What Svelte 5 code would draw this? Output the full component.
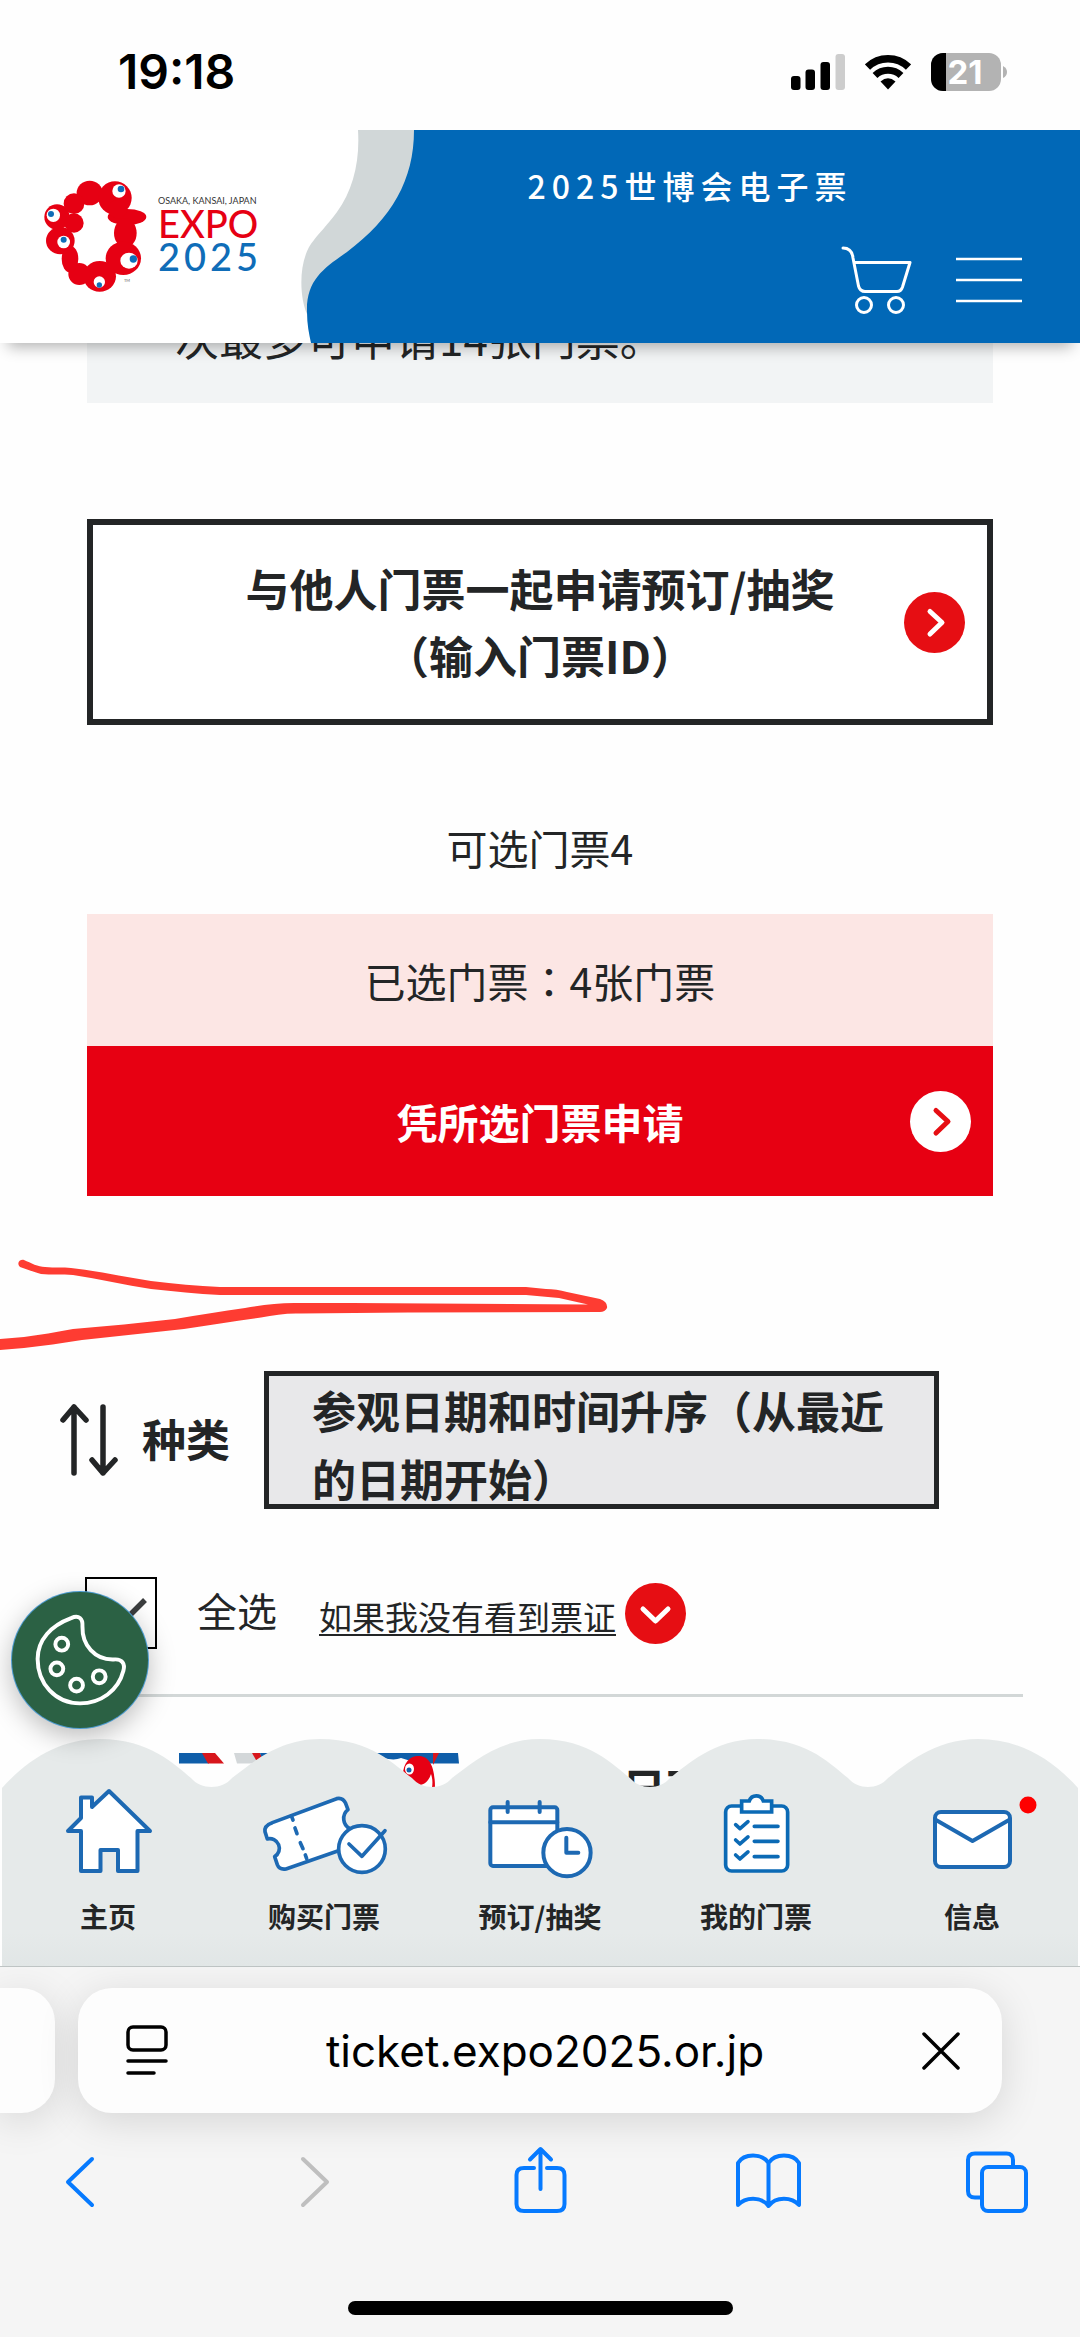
<script>
  let allSelected = $state(true);

  const navItems = [
    { id: 'home', label: '主页' },
    { id: 'buy', label: '购买门票' },
    { id: 'reserve', label: '预订/抽奖' },
    { id: 'mine', label: '我的门票' },
    { id: 'info', label: '信息' }
  ];
</script>

<div class="screen">
  <div class="status">
    <span class="clock">19:18</span>
    <div class="indicators">
      <svg width="54" height="36" viewBox="0 0 54 36" aria-hidden="true">
        <rect x="0" y="22" width="9.5" height="14" rx="3" />
        <rect x="14.5" y="15.5" width="9.5" height="20.5" rx="3" />
        <rect x="29.5" y="8" width="9.5" height="28" rx="3" />
        <rect x="44.5" y="0" width="9.5" height="36" rx="3" fill="#cdcdcd" />
      </svg>
      <svg width="46" height="36" viewBox="0 0 46 36" aria-hidden="true">
        <path d="M2.5 13A29.5 29.5 0 0 1 43.5 13" fill="none" stroke="#000" stroke-width="7.5" />
        <path d="M10 21.5A19 19 0 0 1 36 21.5" fill="none" stroke="#000" stroke-width="7" />
        <path d="M15.5 27.5Q23 21 30.5 27.5L23 35.500Z" />
      </svg>
      <svg width="76" height="38" viewBox="0 0 76 38" role="img" aria-label="21%">
        <clipPath id="cell"><rect width="70" height="38" rx="12" /></clipPath>
        <g clip-path="url(#cell)">
          <rect width="70" height="38" fill="#b3b3b3" />
          <rect width="15" height="38" />
        </g>
        <path d="M72 13Q76 15 76 19T72 25Z" fill="#b3b3b3" />
        <text x="34" y="31" text-anchor="middle" class="charge">21</text>
      </svg>
    </div>
  </div>

  <header>
    <svg class="header-bg" viewBox="0 0 1080 213" preserveAspectRatio="none" aria-hidden="true">
      <path d="M358 0C360 32 353 60 337 82C326 97 318 104 314 110C298 128 299 166 307 184L340 184L440 0Z" fill="#d1d7d8" />
      <path d="M414 0C414 50 392 88 347 122C324 138 306 150 307 182C307 194 309 204 311 213H1080V0Z" fill="#0168b7" />
    </svg>
    <a class="logo" href="#top" aria-label="EXPO 2025">
      <svg width="103" height="113" viewBox="41 31 309 339" aria-hidden="true">
        <g fill="#e60013">
          <ellipse cx="178" cy="70" rx="39" ry="37" />
          <circle cx="254" cy="85" r="50" />
          <ellipse cx="290" cy="142" rx="58" ry="24" />
          <ellipse cx="285" cy="190" rx="34" ry="44" />
          <ellipse cx="279" cy="266" rx="53" ry="50" />
          <ellipse cx="208" cy="320" rx="49" ry="46" />
          <circle cx="147" cy="313" r="33" />
          <ellipse cx="119" cy="268" rx="25" ry="40" />
          <ellipse cx="90" cy="213" rx="43" ry="41" />
          <circle cx="80" cy="142" r="38" />
          <circle cx="131" cy="160" r="29" />
          <circle cx="131" cy="102" r="31" />
          <circle cx="262" cy="118" r="28" />
        </g>
        <g fill="#fff">
          <circle cx="266" cy="64" r="20" />
          <ellipse cx="296" cy="273" rx="26" ry="24" />
          <circle cx="207" cy="337" r="17" />
          <circle cx="100" cy="217" r="19" />
          <circle cx="69" cy="137" r="20" />
        </g>
        <g fill="#0f6db8">
          <circle cx="272" cy="58" r="10" />
          <circle cx="309" cy="268" r="11" />
          <circle cx="207" cy="346" r="8" />
          <circle cx="100" cy="210" r="9" />
          <circle cx="62" cy="133" r="9" />
        </g>
        <text x="281" y="336" class="tm">TM</text>
      </svg>
      <span class="logo-text">
        <small>OSAKA, KANSAI, JAPAN</small>
        <span class="expo">EXPO</span>
        <span class="year">2025</span>
      </span>
    </a>
    <div class="header-main">
      <h1>2025世博会电子票</h1>
      <div class="actions">
        <button type="button" aria-label="购物车">
          <svg width="72" height="70" viewBox="0 0 72 70" aria-hidden="true" fill="none" stroke="#fff" stroke-width="3" stroke-linejoin="round" stroke-linecap="round">
            <path d="M2 3Q11 3 12 13L17.500 41Q19 46.500 24 46.500H56Q60 46.500 61.500 42L69 17.500H13" />
            <circle cx="23" cy="60" r="7.500" />
            <circle cx="55" cy="60" r="7.500" />
          </svg>
        </button>
        <button type="button" aria-label="菜单">
          <svg width="66" height="46" viewBox="0 0 66 46" aria-hidden="true" stroke="#fff" stroke-width="2.500">
            <path d="M0 2H66M0 23H66M0 44H66" />
          </svg>
        </button>
      </div>
    </div>
  </header>

  <main>
    <section class="column">
      <p class="notice">次最多可申请14张门票。</p>

      <button class="outline" type="button">
        <span class="text">与他人门票一起申请预订/抽奖<br />（输入门票ID）</span>
        <svg width="61" height="61" viewBox="0 0 61 61" aria-hidden="true">
          <circle cx="30.500" cy="30.500" r="30.500" fill="#e60e13" />
          <path d="M26 19.500L38 30.500L26 42" fill="none" stroke="#fff" stroke-width="5" stroke-linecap="round" stroke-linejoin="round" />
        </svg>
      </button>

      <p class="available">可选门票4</p>
      <p class="selected">已选门票：4张门票</p>
      <button class="apply" type="button">
        <span class="text">凭所选门票申请</span>
        <svg width="61" height="61" viewBox="0 0 61 61" aria-hidden="true">
          <circle cx="30.500" cy="30.500" r="30.500" fill="#fff" />
          <path d="M26 19.500L38 30.500L26 42" fill="none" stroke="#e60e13" stroke-width="5" stroke-linecap="round" stroke-linejoin="round" />
        </svg>
      </button>
    </section>

    <svg class="scribble" width="610" height="90" viewBox="0 0 610 90" aria-hidden="true">
      <path d="M24 0C31 3 38 7 45 7C55 8 63 7 71 8C98 11 124 17 151 21C175 24 197 26 220 27H526L546 29C553 29 560 30 567 32L600 39Q608 42 607 48Q605 52 600 52L408 52.500L300 53.500C287 53 274 55 261 57.500C236 61 210 65 184 69L82 80C62 83 43 86 24 88L0 90V79L24 77C40 75 56 72 73 69C107 66 141 63 175 59C199 55 222 51 245 48C262 45 278 43 294 43H351L588 44.500L559 38C548 37 537 36 526 35H220C197 34 174 31 151 29C125 25 99 19 73 15C62 14 51 15 41 14C33 12 27 9 20 7C16 3 20 -1 24 0Z" fill="#fe3c32" />
    </svg>

    <section class="sort">
      <svg width="60" height="74" viewBox="0 0 60 74" aria-hidden="true" fill="none" stroke="#232526" stroke-width="5.500" stroke-linecap="round" stroke-linejoin="round">
        <path d="M15 70V4M4 17L15 4L27 17M44 4V70M33 57L44 70L56 57" />
      </svg>
      <span id="sort-label">种类</span>
      <button class="sort-box" type="button" aria-haspopup="listbox" aria-labelledby="sort-label sort-value">
        <span id="sort-value">参观日期和时间升序（从最近的日期开始）</span>
      </button>
    </section>

    <section class="select-row">
      <label>
        <span class="box">
          <input type="checkbox" bind:checked={allSelected} />
          {#if allSelected}
            <svg width="72" height="72" viewBox="0 0 72 72" aria-hidden="true">
              <path d="M17 38L31 52L60 23" fill="none" stroke="#3c3e3f" stroke-width="5.500" />
            </svg>
          {/if}
        </span>
        <span class="all">全选</span>
      </label>
      <a class="missing" href="#missing">
        <span>如果我没有看到票证</span>
        <svg width="61" height="61" viewBox="0 0 61 61" aria-hidden="true">
          <circle cx="30.500" cy="30.500" r="30.500" fill="#e60e13" />
          <path d="M18 26L30.500 38L43 26" fill="none" stroke="#fff" stroke-width="5" stroke-linecap="round" stroke-linejoin="round" />
        </svg>
      </a>
    </section>
    <hr />

    <article class="ticket">
      <svg width="280" height="35" viewBox="0 0 280 35" aria-hidden="true">
        <path d="M0 0H24L30 10.500H0Z" fill="#0f5ea9" />
        <path d="M23 0H36L45 10.500H29Z" fill="#d7161c" />
        <path d="M55 0H73L81 10.500H58Z" fill="#d3d7d9" />
        <path d="M73 0H81L86 10.500H79Z" fill="#d7161c" />
        <path d="M81 0H100V10.500H85Z" fill="#0f5ea9" />
        <path d="M196 0H279L280 10.500H240L222 5C215 8 203 6 196 0Z" fill="#0f5ea9" />
        <path d="M254 0H260L254 12Z" fill="#d7161c" />
        <path d="M224 22C224 10 231 3 239 3C250 3 256 12 256 35H253C254 28 253 24 252 21C250 28 245 32 240 32C233 31 226 25 224 22Z" fill="#e60013" />
        <ellipse cx="230.500" cy="16" rx="4.500" ry="5.500" fill="#fff" />
        <circle cx="230" cy="17" r="2.500" fill="#0f5ea9" />
      </svg>
      <strong>日下</strong>
    </article>
  </main>

  <nav aria-label="主导航">
    <svg class="wave" viewBox="0 0 1080 227" preserveAspectRatio="none" aria-hidden="true">
      <defs>
        <linearGradient id="haze" x1="0" y1="0" x2="0" y2="1">
          <stop offset="0.85" stop-color="#e6eaea" />
          <stop offset="1" stop-color="#e1e6e6" />
        </linearGradient>
      </defs>
      <path d="M2 49C30 18 62 0 100 0C150 0 175 26 191 39C201 51 222 51 232 39C250 26 277 0 320 0C372 0 394 26 412 39C422 51 442 51 452 39C470 26 497 0 540 0C590 0 613 26 630 39C640 51 660 51 670 39C687 26 714 0 757 0C808 0 831 26 848 39C858 51 878 51 888 39C905 26 934 0 978 0C1018 0 1050 18 1078 49V227H2Z" fill="url(#haze)" />
    </svg>
    {#each navItems as item (item.id)}
      <a href={'#' + item.id}>
        <svg width="130" height="96" viewBox="0 0 130 96" aria-hidden="true" fill="#fff" stroke="#1d69b3" stroke-width="4" stroke-linecap="round" stroke-linejoin="round">
          {#if item.id === 'home'}
            <path d="M66 5L107 45H94.500V85H75V64H57.500V85H38V45H25L38 32V11.500H49V21Z" />
          {:else if item.id === 'buy'}
            <g transform="translate(-99 -66) scale(.3333)" stroke-width="11">
              <path d="M337 308L530 236Q549 232 557 250L564 269A34 34 0 0 0 570 326L600 370L378 447Q358 450 352 434L344 410A29 29 0 0 0 322 357L315 335Q312 317 337 308Z" />
              <path d="M395 290L399 300M405 324L411 341M421 368L429 386M436 405L440 416" />
              <circle cx="606" cy="387" r="70" />
              <path d="M567 372L606 409L675 332" fill="none" />
            </g>
          {:else if item.id === 'reserve'}
            <g transform="translate(-5 -56) scale(.3333)" stroke-width="12">
              <rect x="61" y="232" width="201" height="176" rx="8" />
              <path d="M61 277H262M113 216V246M209 216V246" />
              <circle cx="291" cy="368" r="71" />
              <path d="M289 323V368H325" fill="none" />
            </g>
          {:else if item.id === 'mine'}
            <g transform="translate(-221 -56) scale(.3333)" stroke="#0b6ab5" stroke-width="11">
              <rect x="767" y="228" width="186" height="195" rx="18" />
              <path d="M815 213H838A22 22 0 0 1 880 213H905V246H815Z" stroke-linejoin="miter" />
              <path d="M797 284L810 296L834 275M797 330L810 342L834 321M797 375L810 387L834 366" fill="none" />
              <path d="M853 289H924M853 334H924M853 380H924" />
            </g>
          {:else}
            <rect x="28" y="26" width="75" height="55" rx="6" />
            <path d="M29 34L65.500 55L102 34" fill="none" />
            <circle cx="121" cy="19" r="8.500" fill="#fe0000" stroke="none" />
          {/if}
        </svg>
        <span>{item.label}</span>
      </a>
    {/each}
    <button class="cookie" type="button" aria-label="Cookie">
      <svg width="136" height="136" viewBox="0 0 138 138" aria-hidden="true" fill="none" stroke="#fff" stroke-width="4">
        <path d="M60 26.500C68 23 72 27 71.500 35C71 54 84 69 103 68.500C112 67.500 115 73 113 80C108 100 90 113 69 113C44 113 26 93 26 68C26 48 40 34 60 26.500Z" />
        <circle cx="50.500" cy="53" r="6.500" />
        <circle cx="45.500" cy="78" r="6.500" />
        <circle cx="65.500" cy="94.500" r="6.500" />
        <circle cx="88.500" cy="86" r="6.500" />
      </svg>
    </button>
  </nav>

  <footer>
    <div class="tabs">
      <div class="prev-tab"></div>
      <div class="address">
        <button type="button" aria-label="页面菜单">
          <svg width="42" height="52" viewBox="0 0 42 52" aria-hidden="true" fill="none" stroke="#000" stroke-width="3.500" stroke-linecap="round">
            <rect x="2" y="2" width="38" height="23" rx="5" />
            <path d="M2 36H40M2 48H28" />
          </svg>
        </button>
        <span class="url">ticket.expo2025.or.jp</span>
        <button type="button" aria-label="停止">
          <svg width="38" height="38" viewBox="0 0 38 38" aria-hidden="true" fill="none" stroke="#000" stroke-width="3.500" stroke-linecap="round">
            <path d="M2 2L36 36M36 2L2 36" />
          </svg>
        </button>
      </div>
    </div>
    <div class="tools">
      <button type="button" aria-label="后退">
        <svg width="66" height="70" viewBox="0 0 66 70" aria-hidden="true"><path d="M45 14L21 37L45 60" /></svg>
      </button>
      <button type="button" aria-label="前进" disabled>
        <svg width="66" height="70" viewBox="0 0 66 70" aria-hidden="true"><path d="M27 14L51 37L27 60" /></svg>
      </button>
      <button type="button" aria-label="分享">
        <svg width="66" height="70" viewBox="0 0 66 70" aria-hidden="true">
          <path d="M28 23H18Q10.500 23 10.500 30V59Q10.500 66 18 66H51Q58.500 66 58.500 59V30Q58.500 23 51 23H41M34.500 44V5M24 14.500L34.500 4L45 14.500" />
        </svg>
      </button>
      <button type="button" aria-label="书签">
        <svg width="66" height="70" viewBox="0 0 66 70" aria-hidden="true">
          <path d="M33.500 18C27 8 9 8 3 18V60C10 52 26 51 33.500 61C41 51 57 52 64 60V18C58 8 40 8 33.500 18ZV60" />
        </svg>
      </button>
      <button type="button" aria-label="标签页">
        <svg width="66" height="70" viewBox="0 0 66 70" aria-hidden="true">
          <path d="M49 21V15Q49 8.500 42.500 8.500H11Q4 8.500 4 15V46Q4 52.500 11 52.500H17" />
          <rect x="18" y="22" width="44" height="44" rx="6" />
        </svg>
      </button>
    </div>
    <div class="indicator"></div>
  </footer>
</div>

<style>
  :global(body) {
    margin: 0;
    background: #fff;
  }

  .screen {
    display: flex;
    flex-direction: column;
    min-height: 100vh;
    overflow: hidden;
    background: #fefefe;
    color: #232526;
    font-family: 'Noto Sans CJK SC', 'Noto Sans', sans-serif;
  }

  svg {
    display: block;
    flex: none;
  }

  button {
    margin: 0;
    padding: 0;
    border: 0;
    background: none;
    color: inherit;
    font: inherit;
    cursor: pointer;
  }

  p,
  h1 {
    margin: 0;
    font-weight: 400;
  }

  .status {
    display: flex;
    align-items: center;
    justify-content: space-between;
    box-sizing: border-box;
    height: 130px;
    padding: 13px 73px 0 118px;
    color: #000;
  }

  .clock {
    font: 600 48px/60px Inter, sans-serif;
  }

  .indicators {
    display: flex;
    align-items: center;
    gap: 20px;
  }

  .charge {
    font: 700 33px Inter, sans-serif;
    fill: #fff;
  }

  header {
    position: relative;
    z-index: 2;
    display: grid;
    grid-template-columns: 300px 1fr;
    height: 213px;
    background: #fff;
    box-shadow: 0 12px 14px -8px rgba(0, 0, 0, 0.3);
  }

  .header-bg {
    position: absolute;
    inset: 0;
    width: 100%;
    height: 100%;
  }

  .logo {
    position: relative;
    display: flex;
    align-items: flex-start;
    gap: 11px;
    padding: 50px 0 0 44px;
    text-decoration: none;
  }

  .tm {
    font: 12px Lato, sans-serif;
    fill: #666;
  }

  .logo-text {
    display: flex;
    flex-direction: column;
    padding-top: 15px;
    font-family: Lato, sans-serif;
    white-space: nowrap;
  }

  .logo-text small {
    color: #333;
    font-size: 9px;
    line-height: 12px;
  }

  .expo,
  .year {
    font-size: 38px;
    font-weight: 500;
    line-height: 33px;
  }

  .expo {
    color: #e60013;
  }

  .year {
    color: #0f6db8;
    letter-spacing: 4px;
  }

  .header-main {
    position: relative;
    padding: 35px 58px 0 0;
    color: #fff;
  }

  h1 {
    padding-left: 58px;
    font-size: 32px;
    font-weight: 500;
    line-height: 40px;
    letter-spacing: 6px;
    text-align: center;
  }

  .actions {
    display: flex;
    align-items: center;
    justify-content: flex-end;
    gap: 43px;
    padding-top: 40px;
  }

  main {
    margin-top: -40px;
  }

  .column {
    display: flex;
    flex-direction: column;
    padding: 0 87px;
  }

  .notice {
    padding: 0 88px 32px;
    background: #f2f4f5;
    font-size: 44px;
    line-height: 68px;
  }

  .outline,
  .apply {
    display: grid;
    grid-template-columns: 61px 1fr 61px;
    align-items: center;
    padding: 0 22px;
    font-weight: 700;
    text-align: center;
  }

  .outline .text,
  .apply .text {
    grid-column: 2;
  }

  .outline {
    height: 206px;
    margin-top: 116px;
    border: 6px solid #232526;
    background: #fff;
    font-size: 44px;
    line-height: 67px;
  }

  .available {
    margin: 92px 0 37px;
    font-size: 41px;
    line-height: 60px;
    text-align: center;
  }

  .selected {
    background: #fce6e4;
    font-family: 'Noto Sans CJK JP', 'Noto Sans CJK SC', sans-serif;
    font-size: 41px;
    line-height: 132px;
    text-align: center;
  }

  .apply {
    height: 150px;
    background: #e70012;
    color: #fff;
    font-size: 41px;
    line-height: 60px;
  }

  .scribble {
    overflow: visible;
    margin: 64px 0 21px;
  }

  .sort {
    display: flex;
    align-items: center;
    padding: 0 141px 0 59px;
    font-size: 44px;
    font-weight: 700;
    line-height: 68px;
    white-space: nowrap;
  }

  .sort > span {
    padding: 0 34px 4px 23px;
  }

  .sort-box {
    display: flex;
    flex: 1;
    align-items: flex-start;
    height: 138px;
    padding: 0 40px 0 43px;
    border: 5px solid #232526;
    background: #e8e8ea;
    text-align: left;
    white-space: normal;
  }

  .select-row {
    display: flex;
    align-items: center;
    gap: 42px;
    padding: 68px 57px 45px 85px;
  }

  .select-row label {
    display: flex;
    align-items: center;
    gap: 40px;
    font-size: 40px;
    line-height: 60px;
  }

  .all {
    padding-bottom: 6px;
  }

  .box {
    display: grid;
  }

  .box > * {
    grid-area: 1 / 1;
  }

  .box input {
    appearance: none;
    box-sizing: border-box;
    width: 72px;
    height: 72px;
    margin: 0;
    border: 2px solid #000;
    background: #fff;
  }

  .box svg {
    pointer-events: none;
  }

  .missing {
    display: flex;
    align-items: center;
    gap: 9px;
    color: inherit;
    font-size: 33px;
    line-height: 48px;
    text-decoration: none;
  }

  .missing span {
    padding-top: 6px;
    text-decoration: underline;
    text-decoration-thickness: 2px;
    text-underline-offset: 4px;
  }

  hr {
    height: 3px;
    margin: 0 57px;
    border: 0;
    background: #d2d7d7;
  }

  .ticket {
    display: flex;
    height: 35px;
    overflow: hidden;
    padding: 56px 57px 0 179px;
    gap: 163px;
  }

  .ticket strong {
    padding-top: 12px;
    font-size: 44px;
    line-height: 44px;
  }

  nav {
    position: relative;
    z-index: 1;
    display: grid;
    grid-template-columns: repeat(5, 1fr);
    height: 227px;
    margin-top: -49px;
  }

  .wave {
    position: absolute;
    inset: 0;
    width: 100%;
    height: 100%;
  }

  nav a {
    position: relative;
    display: flex;
    flex-direction: column;
    align-items: center;
    gap: 14px;
    padding-top: 47px;
    color: inherit;
    font-size: 28px;
    font-weight: 700;
    line-height: 40px;
    text-decoration: none;
  }

  .cookie {
    position: absolute;
    bottom: calc(100% + 11px);
    left: 12px;
    border-radius: 50%;
    background: #2b6144;
    box-shadow: 0 0 0 1px #4d9bd0, 0 8px 28px rgba(0, 0, 0, 0.28);
  }

  footer {
    flex: 1;
    border-top: 1px solid #bfc5c5;
    background: #f5f5f5;
    color: #000;
  }

  .tabs {
    display: flex;
    gap: 23px;
    padding: 21px 78px 0 0;
  }

  .prev-tab {
    width: 55px;
    border-radius: 0 34px 34px 0;
    background: #fdfdfd;
    box-shadow: 0 8px 40px rgba(0, 0, 0, 0.13);
  }

  .address {
    display: flex;
    flex: 1;
    align-items: center;
    justify-content: space-between;
    height: 125px;
    padding: 0 42px 0 48px;
    border-radius: 34px;
    background: #fdfdfd;
    box-shadow: 0 8px 40px rgba(0, 0, 0, 0.13);
  }

  .url {
    font: 400 44px/60px Inter, sans-serif;
  }

  .tools {
    display: flex;
    justify-content: space-between;
    padding: 32px 50px 0 47px;
  }

  .tools path,
  .tools rect {
    fill: none;
    stroke: #067aff;
    stroke-width: 4;
    stroke-linecap: round;
    stroke-linejoin: round;
  }

  .tools button:disabled path {
    stroke: #bfbfbf;
  }

  .indicator {
    width: 385px;
    height: 14px;
    margin: 86px auto 0;
    border-radius: 7px;
    background: #000;
  }
</style>
